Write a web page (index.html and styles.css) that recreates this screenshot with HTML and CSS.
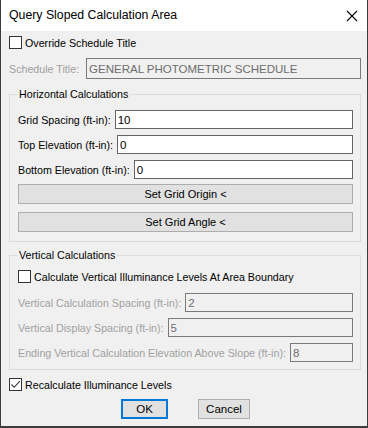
FILE: index.html
```html
<!DOCTYPE html>
<html lang="en">
<head>
    <meta charset="UTF-8">
    <meta name="viewport" content="width=device-width, initial-scale=1.0">
    <title>Query Sloped Calculation Area</title>
    <link rel="stylesheet" href="styles.css">
</head>
<body>

<div class="window">
    <div class="titlebar">
        <span class="title">Query Sloped Calculation Area</span>
        <svg class="close" width="12" height="12" viewBox="0 0 12 12">
            <path d="M1 1 L11 11 M11 1 L1 11" stroke="#000" stroke-width="1.1" fill="none"/>
        </svg>
    </div>

    <div class="content">
        <label class="check-row">
            <span class="box"></span>
            <span>Override Schedule Title</span>
        </label>

        <div class="field-row top-field disabled">
            <label for="schedTitle">Schedule Title:</label>
            <input type="text" id="schedTitle" value="GENERAL PHOTOMETRIC SCHEDULE" disabled>
        </div>

        <fieldset class="group horizontal">
            <legend>Horizontal Calculations</legend>
            <div class="field-row">
                <label for="gridSpacing">Grid Spacing (ft-in):</label>
                <input type="text" id="gridSpacing" value="10">
            </div>
            <div class="field-row">
                <label for="topElev">Top Elevation (ft-in):</label>
                <input type="text" id="topElev" value="0">
            </div>
            <div class="field-row">
                <label for="bottomElev">Bottom Elevation (ft-in):</label>
                <input type="text" id="bottomElev" value="0">
            </div>
            <button class="wide-btn first">Set Grid Origin &lt;</button>
            <button class="wide-btn">Set Grid Angle &lt;</button>
        </fieldset>

        <fieldset class="group vertical">
            <legend>Vertical Calculations</legend>
            <label class="check-row inner">
                <span class="box"></span>
                <span>Calculate Vertical Illuminance Levels At Area Boundary</span>
            </label>
            <div class="field-row disabled">
                <label for="vertSpacing">Vertical Calculation Spacing (ft-in):</label>
                <input type="text" id="vertSpacing" value="2" disabled>
            </div>
            <div class="field-row disabled">
                <label for="vertDisplay">Vertical Display Spacing (ft-in):</label>
                <input type="text" id="vertDisplay" value="5" disabled>
            </div>
            <div class="field-row disabled">
                <label for="endElev">Ending Vertical Calculation Elevation Above Slope (ft-in):</label>
                <input type="text" id="endElev" value="8" disabled>
            </div>
        </fieldset>

        <label class="check-row recalc">
            <span class="box">
                <svg width="11" height="11" viewBox="0 0 11 11">
                    <path d="M1.5 5.5 L4.2 8.3 L9.8 2.2" stroke="#333" stroke-width="1.1" fill="none"/>
                </svg>
            </span>
            <span>Recalculate Illuminance Levels</span>
        </label>

        <div class="actions">
            <button class="btn default">OK</button>
            <button class="btn">Cancel</button>
        </div>
    </div>
</div>

</body>
</html>
```

FILE: styles.css
```css
body {
    margin: 0;
    font-family: 'Liberation Sans', Arial, sans-serif;
    font-size: 10.7px;
    color: #000;
    background-color: #f0f0f0;
}

.window {
    width: 366px;
    height: 426px;
    border: 1px solid #3c3c3c;
    border-top: none;
    border-bottom-width: 2px;
    background-color: #f0f0f0;
    overflow: hidden;
}

.titlebar {
    height: 31px;
    background-color: #fff;
    display: flex;
    align-items: center;
    justify-content: space-between;
    padding: 0 9px 0 8px;
}

.title {
    font-size: 12.3px;
    margin-top: -1px;
}

.content {
    padding: 5px 6px 0 8px;
}

.check-row {
    display: flex;
    align-items: center;
    gap: 3px;
    height: 13px;
}

.box {
    width: 11px;
    height: 11px;
    border: 1px solid #333;
    background-color: #fff;
    display: flex;
}

.field-row {
    display: flex;
    align-items: center;
    gap: 4px;
    height: 19px;
    margin-top: 6px;
}

.field-row input {
    flex: 1;
    min-width: 0;
    height: 19px;
    box-sizing: border-box;
    margin: 0;
    padding: 0 2px;
    border: 1px solid #646464;
    background-color: #fff;
    font-family: inherit;
    font-size: 11.5px;
    color: #000;
    outline: none;
}

.field-row.disabled label {
    color: #a0a0a0;
}

.field-row input:disabled {
    background-color: #f0f0f0;
    border-color: #7a7a7a;
    color: #6d6d6d;
}

.top-field {
    margin-top: 9px;
    height: 21px;
    gap: 7px;
}

.top-field input {
    height: 21px;
}

.group {
    margin: 0;
    border: 1px solid #dcdcdc;
    padding: 0 7px 9px 8px;
}

.group legend {
    padding: 0 2px;
    margin-left: -1px;
    line-height: 13px;
}

.horizontal {
    margin-top: 9px;
}

.horizontal .field-row:first-of-type {
    margin-top: 9px;
}

.vertical {
    margin-top: 7px;
    padding-bottom: 7px;
}

.check-row.inner {
    margin-top: 8px;
}

.vertical .field-row:first-of-type {
    margin-top: 10px;
}

.wide-btn {
    display: block;
    width: 100%;
    height: 20px;
    margin-top: 8px;
    padding: 0;
    background-color: #e1e1e1;
    border: 1px solid #adadad;
    font-family: inherit;
    font-size: 11px;
    color: #000;
}

.wide-btn.first {
    margin-top: 5px;
}

.recalc {
    margin-top: 8px;
}

.actions {
    display: flex;
    gap: 30px;
    margin: 8px 0 0 112px;
}

.btn {
    width: 52px;
    height: 20px;
    padding: 0;
    background-color: #e1e1e1;
    border: 1px solid #adadad;
    font-family: inherit;
    font-size: 11.5px;
    color: #000;
}

.btn.default {
    width: 47px;
    border: 2px solid #0078d7;
}
```
